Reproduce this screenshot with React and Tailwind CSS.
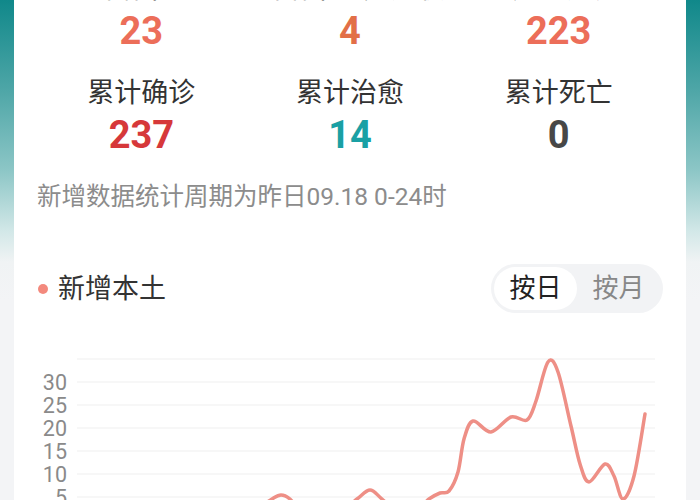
import React from "react";

const FONT = { fontFamily: "Roboto, 'Noto Sans CJK SC', sans-serif" };

const stats = [
  { label: "新增本土", value: "23", color: "text-[#ec6e59]" },
  { label: "新增本土无症状", value: "4", color: "text-[#e26f47]" },
  { label: "现有确诊", value: "223", color: "text-[#ec6e59]" },
  { label: "累计确诊", value: "237", color: "text-[#d6383a]" },
  { label: "累计治愈", value: "14", color: "text-[#1aa0a4]" },
  { label: "累计死亡", value: "0", color: "text-[#474747]" },
];

const RAW = [
  [230, 530], [250, 515], [272, 500], [281, 496], [290, 500], [305, 515], [340, 512],
  [357, 500], [370, 491], [382, 500], [400, 515], [420, 508], [429, 500],
  [440, 494], [449, 492], [458, 473], [464, 440], [473, 422], [491, 433],
  [511, 418], [527, 421], [536, 402], [548, 363], [558, 373], [571, 427],
  [580, 465], [589, 483], [605, 465], [614, 477], [623, 500], [634, 477],
  [645, 415],
];

function smoothPath(pts) {
  let d = `M${pts[0][0]},${pts[0][1]}`;
  for (let i = 0; i < pts.length - 1; i++) {
    const p0 = pts[i - 1] || pts[i];
    const p1 = pts[i];
    const p2 = pts[i + 1];
    const p3 = pts[i + 2] || p2;
    const c1x = p1[0] + (p2[0] - p0[0]) / 6;
    const c1y = p1[1] + (p2[1] - p0[1]) / 6;
    const c2x = p2[0] - (p3[0] - p1[0]) / 6;
    const c2y = p2[1] - (p3[1] - p1[1]) / 6;
    d += ` C${c1x.toFixed(1)},${c1y.toFixed(1)} ${c2x.toFixed(1)},${c2y.toFixed(1)} ${p2[0]},${p2[1]}`;
  }
  return d;
}

function Chart() {
  const pts = RAW.map(([x, y]) => [x - 37, y - 340]);
  const grid = [20, 43, 66, 89, 112, 135, 158, 181];
  const labels = [
    ["30", 43],
    ["25", 66],
    ["20", 89],
    ["15", 112],
    ["10", 135],
    ["5", 158],
    ["0", 181],
  ];
  return (
    <svg width="626" height="220" viewBox="0 0 626 220" className="block">
      {grid.map((y) => (
        <line key={y} x1="40" x2="618" y1={y} y2={y} stroke="#efefef" strokeWidth="1.2" />
      ))}
      {labels.map(([t, y]) => (
        <text
          key={t}
          x="30"
          y={y + 7.5}
          textAnchor="end"
          fontSize="21.5"
          fill="#8a8a8a"
          fontFamily="Roboto, sans-serif"
        >
          {t}
        </text>
      ))}
      <path d={smoothPath(pts)} fill="none" stroke="#ee8f86" strokeWidth="3.5" strokeLinejoin="round" strokeLinecap="round" />
    </svg>
  );
}

export default function App() {
  return (
    <div
      className="h-[500px] w-full overflow-hidden px-[14px] bg-[linear-gradient(180deg,#10888a_0px,#4ea6a7_90px,#8cc6c6_170px,#d3e8e8_232px,#f0f3f4_262px,#f3f4f6_300px)]"
      style={FONT}
    >
      <div className="-mt-[29px] bg-white px-[23px] pb-10">
        <div className="grid grid-cols-3 gap-y-[20px]">
          {stats.map((s) => (
            <div key={s.label} className="flex flex-col items-center">
              <div className="text-[27px] leading-[36px] text-[#333] whitespace-nowrap">{s.label}</div>
              <div className={`text-[38px] leading-[48px] font-bold ${s.color}`}>{s.value}</div>
            </div>
          ))}
        </div>
        <div className="mt-[20px] text-[24.5px] leading-[36px] text-[#8c8c8c]">
          新增数据统计周期为昨日09.18 0-24时
        </div>
        <div className="mt-[49px] flex h-[49px] items-center justify-between">
          <div className="flex items-center gap-[10px] pl-[1px]">
            <span className="h-[10px] w-[10px] rounded-full bg-[#f3897d]" />
            <span className="text-[27px] leading-[36px] text-[#333]">新增本土</span>
          </div>
          <div className="flex rounded-full bg-[#f2f3f5] p-[3px]">
            <div className="flex h-[43px] w-[83px] items-center justify-center rounded-full bg-white text-[26px] text-[#222]">
              按日
            </div>
            <div className="flex h-[43px] w-[83px] items-center justify-center rounded-full text-[26px] text-[#888]">
              按月
            </div>
          </div>
        </div>
        <div className="mt-[26px]">
          <Chart />
        </div>
      </div>
    </div>
  );
}
